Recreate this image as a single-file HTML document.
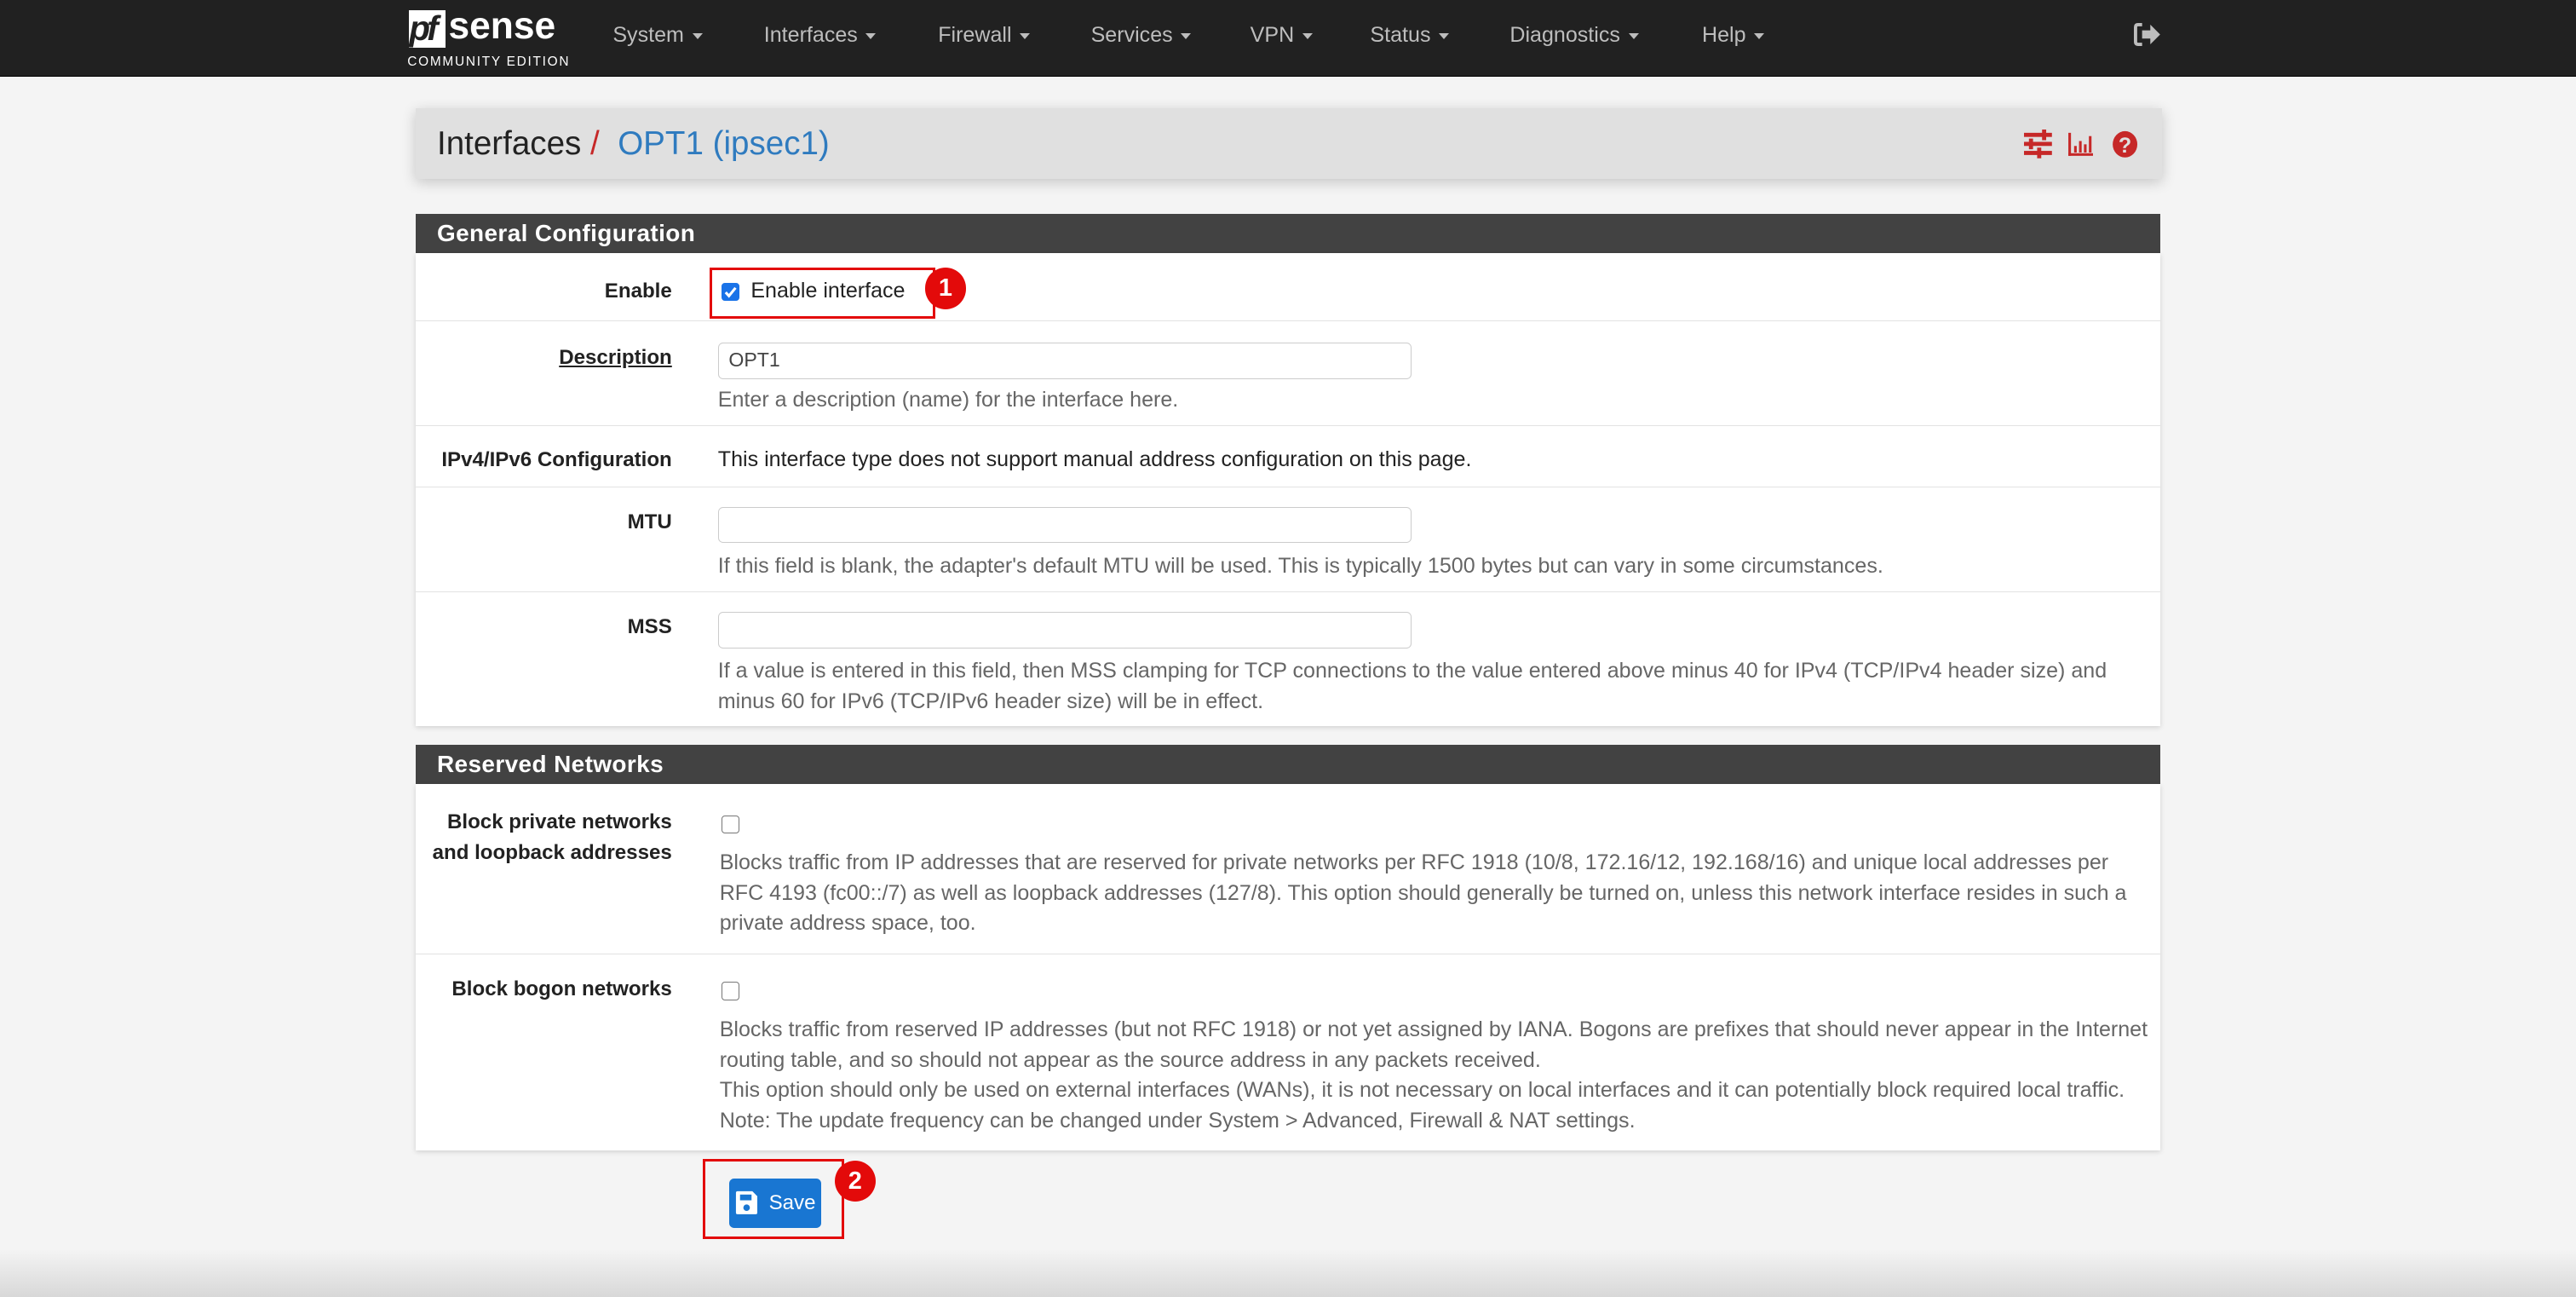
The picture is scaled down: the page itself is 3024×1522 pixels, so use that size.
<!DOCTYPE html>
<html><head><meta charset="utf-8">
<style>
html,body{margin:0;padding:0}
body{width:1568px;height:789px;zoom:1.928571;overflow:hidden;background:#f4f4f4;font-family:"Liberation Sans",Arial,sans-serif;color:#222;position:relative}
.a{position:absolute;white-space:nowrap}
#nav{position:absolute;left:0;top:0;width:1568px;height:46px;background:#212121;border-bottom:1px solid #000}
.ni{position:absolute;top:14px;color:#bdbdbd;font-size:13px}
.ni:after{content:"";display:inline-block;margin-left:5px;vertical-align:middle;border-left:3.5px solid transparent;border-right:3.5px solid transparent;border-top:4px solid #bdbdbd}
.panel{position:absolute;left:253px;width:1062px;background:#fff;box-shadow:0 1px 3px rgba(0,0,0,.15)}
.hdr{position:absolute;left:253px;width:1062px;height:24px;background:#424242;color:#fff;font-weight:bold;font-size:14.5px;letter-spacing:.2px}
.hdr span{position:absolute;left:13px;top:4px}
.row{position:absolute;left:0;width:1062px;border-top:1px solid #e2e2e2}
.lbl{position:absolute;right:906px;text-align:right;font-weight:bold;font-size:12.5px;color:#222;line-height:18.5px}
.ct{position:absolute;left:184px;font-size:13px;line-height:18.5px;color:#222}
.help{color:#666}
.inp{position:absolute;left:184px;width:421px;height:21px;border:1px solid #ccc;border-radius:3px;background:#fff;font-size:12px;color:#444}
.cb{position:absolute;left:186px;width:10px;height:10px;border:1px solid #777;border-radius:2px;background:#fff}
.badge{position:absolute;width:25px;height:25px;border-radius:50%;background:#e30a0a;color:#fff;font-size:15px;font-weight:bold;text-align:center;line-height:25px}
</style></head><body>
<div id="nav">
  <div class="a" style="left:249px;top:6px;width:22px;height:23px;background:#fff"></div>
  <div class="a" style="left:249px;top:5px;font-size:21px;font-weight:bold;font-style:italic;color:#212121;letter-spacing:-2px">pf</div>
  <div class="a" style="left:273px;top:3px;font-size:23px;font-weight:bold;color:#fff;letter-spacing:0px">sense</div>
  <div class="a" style="left:248px;top:33px;font-size:8px;color:#fff;letter-spacing:.9px">COMMUNITY EDITION</div>
  <div class="ni" style="left:373px">System</div>
  <div class="ni" style="left:465px">Interfaces</div>
  <div class="ni" style="left:571px">Firewall</div>
  <div class="ni" style="left:664px">Services</div>
  <div class="ni" style="left:761px">VPN</div>
  <div class="ni" style="left:834px">Status</div>
  <div class="ni" style="left:919px">Diagnostics</div>
  <div class="ni" style="left:1036px">Help</div>
  <svg class="a" style="left:1299px;top:14px" width="17" height="14" viewBox="0 0 17 14"><path d="M5 1H2.5Q1 1 1 2.5v9Q1 13 2.5 13H5" fill="none" stroke="#bdbdbd" stroke-width="2"/><path d="M5 4.5h5V1l6 6-6 6V9.5H5z" fill="#bdbdbd"/></svg>
</div>

<div class="a" style="left:253px;top:66px;width:1063px;height:43px;background:#e0e0e0;box-shadow:0 2px 8px rgba(0,0,0,.2)"></div>
<div class="a" style="left:266px;top:76px;font-size:20px;color:#222">Interfaces <span style="color:#c62828">/</span>&nbsp; <span style="color:#2f7bbf">OPT1 (ipsec1)</span></div>
<svg class="a" style="left:1232px;top:79px" width="70" height="18" viewBox="0 0 70 18">
 <g fill="#c62828"><rect x="0" y="2" width="17" height="2.5"/><rect x="0" y="7.5" width="17" height="2.5"/><rect x="0" y="13" width="17" height="2.5"/><rect x="11" y="0" width="2.5" height="6.5"/><rect x="3" y="5.5" width="2.5" height="6.5"/><rect x="8" y="11" width="2.5" height="6.5"/>
 <rect x="27" y="2" width="1.6" height="14"/><rect x="27" y="14.4" width="15" height="1.6"/><rect x="30.5" y="10" width="1.6" height="4"/><rect x="33.5" y="7" width="1.6" height="7"/><rect x="36.5" y="9" width="1.6" height="5"/><rect x="39.5" y="4" width="1.6" height="10"/>
 <ellipse cx="61.5" cy="9" rx="7.5" ry="8"/></g>
 <text x="61.5" y="14" text-anchor="middle" font-size="13" font-weight="bold" fill="#e0e0e0" font-family="Liberation Sans">?</text>
</svg>

<div class="hdr" style="top:130px"><span>General Configuration</span></div>
<div class="panel" style="top:154px;height:288px">
  <div class="row" style="top:0;height:41px;border-top:none">
    <div class="lbl" style="top:14px">Enable</div>
    <div class="cb" style="top:18px;background:#1a73e8;border-color:#1a73e8"><svg width="10" height="10" viewBox="0 0 10 10" style="position:absolute;left:0;top:0"><path d="M2 5.2l2 2.2L8 2.5" fill="none" stroke="#fff" stroke-width="1.6"/></svg></div>
    <div class="ct" style="left:204px;top:14px">Enable interface</div>
  </div>
  <div class="row" style="top:41px;height:63px">
    <div class="lbl" style="top:13px;text-decoration:underline">Description</div>
    <div class="inp" style="top:13px"><span style="position:absolute;left:6px;top:3px">OPT1</span></div>
    <div class="ct help" style="top:39px">Enter a description (name) for the interface here.</div>
  </div>
  <div class="row" style="top:105px;height:36px">
    <div class="lbl" style="top:11px">IPv4/IPv6 Configuration</div>
    <div class="ct" style="top:11px">This interface type does not support manual address configuration on this page.</div>
  </div>
  <div class="row" style="top:142px;height:63px">
    <div class="lbl" style="top:12px">MTU</div>
    <div class="inp" style="top:12px"></div>
    <div class="ct help" style="top:39px">If this field is blank, the adapter's default MTU will be used. This is typically 1500 bytes but can vary in some circumstances.</div>
  </div>
  <div class="row" style="top:206px;height:82px">
    <div class="lbl" style="top:12px">MSS</div>
    <div class="inp" style="top:12px"></div>
    <div class="ct help" style="top:39px">If a value is entered in this field, then MSS clamping for TCP connections to the value entered above minus 40 for IPv4 (TCP/IPv4 header size) and<br>minus 60 for IPv6 (TCP/IPv6 header size) will be in effect.</div>
  </div>
</div>

<div class="hdr" style="top:453px"><span>Reserved Networks</span></div>
<div class="panel" style="top:477px;height:223px">
  <div class="row" style="top:0;height:103px;border-top:none">
    <div class="lbl" style="top:14px">Block private networks<br>and loopback addresses</div>
    <div class="cb" style="top:19px"></div>
    <div class="ct help" style="left:185px;top:39px">Blocks traffic from IP addresses that are reserved for private networks per RFC 1918 (10/8, 172.16/12, 192.168/16) and unique local addresses per<br>RFC 4193 (fc00::/7) as well as loopback addresses (127/8). This option should generally be turned on, unless this network interface resides in such a<br>private address space, too.</div>
  </div>
  <div class="row" style="top:103px;height:120px">
    <div class="lbl" style="top:12px">Block bogon networks</div>
    <div class="cb" style="top:17px"></div>
    <div class="ct help" style="left:185px;top:37px">Blocks traffic from reserved IP addresses (but not RFC 1918) or not yet assigned by IANA. Bogons are prefixes that should never appear in the Internet<br>routing table, and so should not appear as the source address in any packets received.<br>This option should only be used on external interfaces (WANs), it is not necessary on local interfaces and it can potentially block required local traffic.<br>Note: The update frequency can be changed under System &gt; Advanced, Firewall &amp; NAT settings.</div>
  </div>
</div>

<div class="a" style="left:432px;top:163px;width:134px;height:28px;border:2px solid #e30a0a"></div>
<div class="badge" style="left:563px;top:163px">1</div>

<div class="a" style="left:444px;top:717px;width:56px;height:30px;background:#1976d2;border-radius:3px"></div>
<svg class="a" style="left:447px;top:724px" width="16" height="16" viewBox="0 0 16 16"><path d="M1 2Q1 1 2 1h9l3 3v10q0 1-1 1H2q-1 0-1-1z" fill="#fff"/><rect x="3.5" y="3" width="7" height="3.5" fill="#1976d2"/><circle cx="7.5" cy="11" r="2" fill="#1976d2"/></svg>
<div class="a" style="left:468px;top:725px;color:#fff;font-size:12.5px">Save</div>
<div class="a" style="left:428px;top:705px;width:83px;height:46px;border:2px solid #e30a0a"></div>
<div class="badge" style="left:508px;top:706px">2</div>

<div class="a" style="left:0;top:760px;width:1568px;height:29px;background:linear-gradient(#f4f4f4,#d8d8d8)"></div>
</body></html>
